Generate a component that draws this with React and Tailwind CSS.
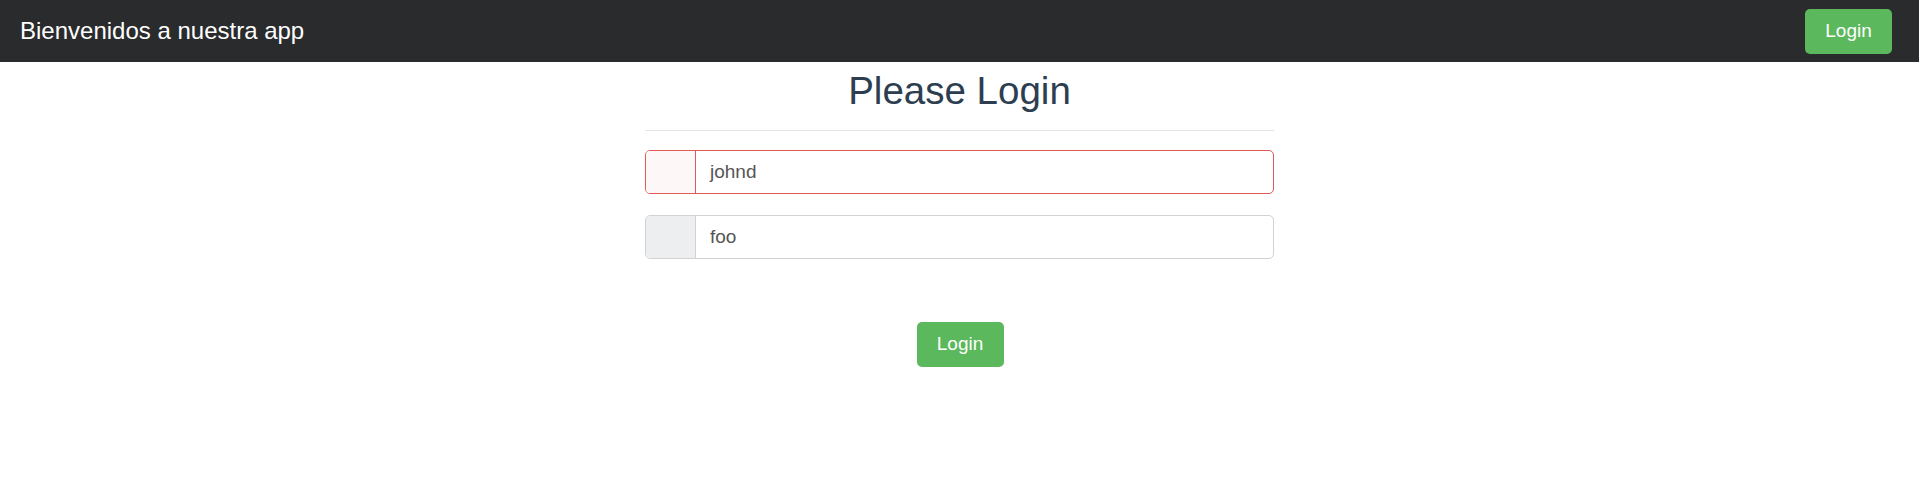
export default function App() {
  const font = { fontFamily: '"Liberation Sans", Arial, Helvetica, sans-serif' };
  return (
    <div className="min-h-[489px] bg-white" style={font}>
      <nav className="flex h-[62px] items-center justify-between bg-[#2a2b2d] pl-[20px] pr-[27px]">
        <span className="text-[24px] leading-none text-white">Bienvenidos a nuestra app</span>
        <button className="flex h-[45px] w-[87px] items-center justify-center rounded-[5px] bg-[#5cb85c] text-[19px] text-white">
          Login
        </button>
      </nav>
      <div className="mx-auto w-[629px] pt-[6px]">
        <h1 className="text-center text-[38.5px] leading-[46px] text-[#2c3e50]">Please Login</h1>
        <div className="mt-[16px] h-px bg-[#e5e5e5]" />
        <div className="mt-[19px] flex h-[44px] overflow-hidden rounded-[5px] border border-[#dd5a56]">
          <div className="w-[50px] shrink-0 border-r border-[#dd5a56] bg-[#fdf7f7]" />
          <div className="flex flex-1 items-center pl-[14px] text-[19px] text-[#555555]">johnd</div>
        </div>
        <div className="mt-[21px] flex h-[44px] overflow-hidden rounded-[5px] border border-[#d2d2d2]">
          <div className="w-[50px] shrink-0 border-r border-[#d2d2d2] bg-[#eceeef]" />
          <div className="flex flex-1 items-center pl-[14px] text-[19px] text-[#555555]">foo</div>
        </div>
        <div className="mt-[63px] flex justify-center pl-[1px]">
          <button className="flex h-[45px] w-[87px] items-center justify-center rounded-[5px] bg-[#5cb85c] text-[19px] text-white">
            Login
          </button>
        </div>
      </div>
    </div>
  );
}
